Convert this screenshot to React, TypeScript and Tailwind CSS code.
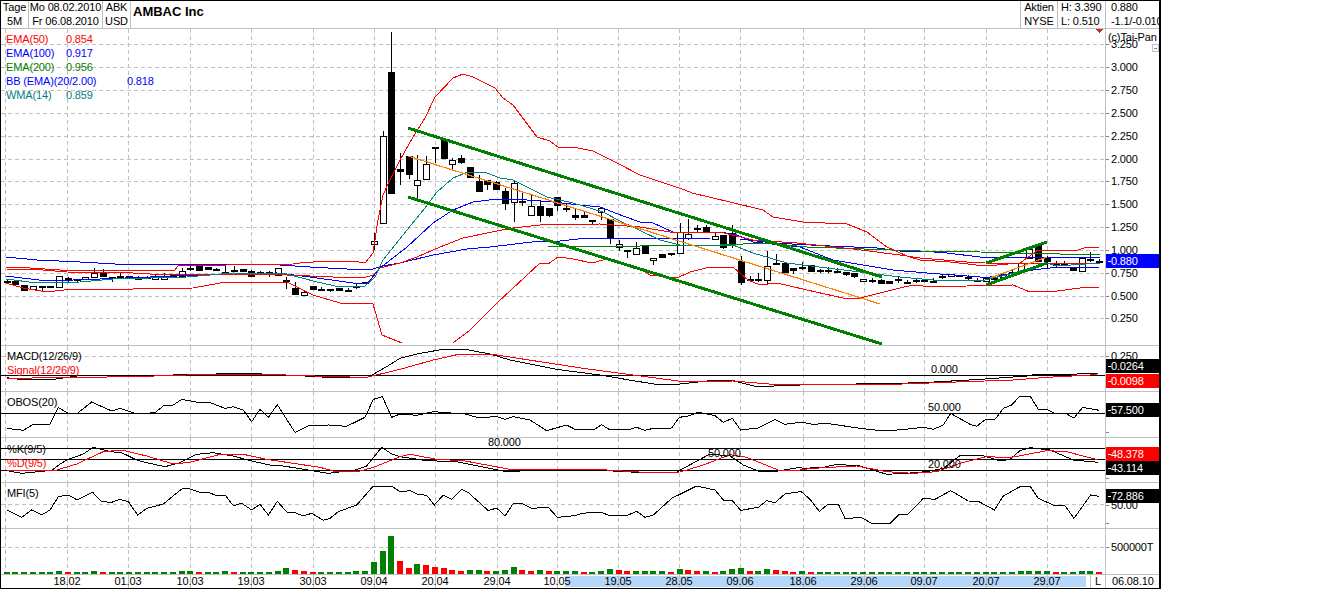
import type { ReactNode } from "react";

type Pt = [number, number];
type Tag = { y: number; text: string; bg: string };
type AxisLabel = { y: number; text: string };
type Candle = [number, number, number, number, number];

const GRID_X = [5, 67, 128, 190, 251, 313, 374, 435, 497, 557, 618, 679, 740, 803, 864, 924, 986, 1047];
const PRICE_Y = [44, 67, 90, 113, 136, 159, 181, 204, 227, 250, 273, 296, 318];

// top, bottom, wick top, wick bottom, filled. page pixels, read off the picture
const CANDLES: Candle[] = [
  [281, 283, 280, 284, 1], [281, 285, 281, 285, 1], [285, 291, 285, 291, 1], [286, 289, 286, 289, 0], [286, 287, 286, 291, 1],
  [286, 287, 286, 287, 1], [276, 287, 276, 287, 0], [278, 280, 277, 283, 1], [279, 281, 279, 283, 1], [277, 279, 277, 280, 0],
  [273, 277, 268, 277, 0], [272, 277, 269, 277, 1], [277, 279, 277, 282, 1], [276, 279, 273, 279, 1], [276, 279, 276, 279, 1],
  [277, 280, 276, 280, 1], [277, 278, 276, 279, 1], [276, 279, 274, 279, 0], [276, 279, 273, 279, 0], [275, 277, 275, 277, 1],
  [271, 276, 268, 276, 0], [268, 269, 264, 271, 1], [266, 271, 266, 271, 1], [267, 270, 267, 270, 1], [269, 270, 268, 271, 1],
  [272, 273, 264, 274, 1], [270, 271, 266, 271, 1], [269, 272, 269, 272, 1], [271, 277, 270, 277, 1], [272, 273, 271, 275, 1],
  [272, 274, 271, 277, 1], [268, 275, 268, 275, 0], [280, 282, 277, 289, 1], [288, 295, 282, 295, 1], [292, 295, 290, 296, 0],
  [286, 290, 286, 290, 1], [289, 291, 287, 291, 1], [289, 291, 289, 292, 1], [288, 291, 288, 291, 1], [290, 291, 288, 291, 1],
  [286, 288, 284, 289, 1], [282, 284, 282, 284, 1], [241, 244, 233, 250, 0], [136, 223, 131, 223, 0], [72, 194, 32, 194, 1],
  [169, 172, 153, 185, 1], [156, 175, 156, 179, 1], [180, 185, 155, 198, 0], [164, 179, 156, 179, 0], [147, 148, 147, 163, 1],
  [140, 159, 140, 159, 1], [160, 164, 158, 169, 0], [158, 163, 155, 164, 1], [167, 178, 167, 178, 1], [181, 192, 175, 192, 1],
  [180, 185, 180, 190, 1], [182, 190, 181, 190, 1], [191, 204, 188, 210, 1], [183, 202, 180, 222, 0], [201, 203, 192, 206, 1],
  [206, 215, 195, 215, 0], [206, 216, 200, 222, 1], [208, 216, 208, 217, 1], [197, 206, 197, 211, 1], [208, 210, 204, 212, 1],
  [215, 218, 208, 220, 1], [215, 218, 212, 218, 1], [220, 222, 220, 224, 1], [208, 212, 207, 220, 0], [219, 239, 219, 244, 1],
  [244, 247, 240, 251, 0], [250, 252, 250, 258, 1], [248, 254, 242, 254, 0], [246, 254, 246, 254, 1], [258, 260, 258, 265, 0],
  [254, 258, 254, 258, 1], [253, 255, 253, 256, 1], [232, 253, 223, 253, 0], [234, 238, 219, 240, 0], [228, 229, 225, 232, 1],
  [227, 233, 225, 233, 1], [236, 239, 232, 239, 0], [235, 248, 235, 249, 1], [233, 246, 225, 248, 1], [261, 283, 256, 285, 1],
  [279, 280, 276, 282, 1], [279, 280, 273, 282, 1], [266, 280, 251, 284, 0], [263, 264, 254, 265, 1], [263, 273, 263, 273, 1],
  [268, 271, 268, 274, 1], [267, 269, 262, 270, 1], [265, 272, 265, 272, 1], [270, 272, 269, 273, 1], [270, 271, 267, 273, 1],
  [271, 273, 268, 273, 1], [272, 275, 272, 276, 1], [273, 277, 273, 278, 1], [279, 281, 279, 281, 0], [280, 281, 278, 283, 1],
  [280, 284, 279, 284, 1], [281, 284, 281, 284, 1], [279, 281, 277, 283, 1], [282, 283, 280, 284, 1], [280, 281, 279, 283, 1],
  [280, 282, 280, 282, 1], [281, 283, 278, 283, 1], [276, 278, 275, 279, 1], [274, 276, 274, 277, 0], [275, 277, 275, 277, 1],
  [277, 279, 275, 280, 1], [280, 281, 278, 281, 1], [278, 281, 278, 281, 0], [278, 280, 278, 281, 1], [274, 277, 274, 279, 0],
  [272, 274, 269, 276, 1], [263, 271, 263, 271, 0], [249, 258, 249, 259, 0], [245, 262, 245, 262, 1], [258, 262, 256, 268, 1],
  [263, 266, 261, 268, 1], [263, 266, 261, 266, 1], [267, 271, 267, 271, 1], [258, 271, 258, 272, 0], [259, 261, 252, 262, 1],
  [261, 263, 259, 264, 1],
];

// index -> volume bar height and colour where it isn't the usual 2px green
const VOLUME: Record<number, [number, string]> = {
  6: [3, "g"], 7: [2, "r"], 10: [3, "g"], 11: [2, "r"], 20: [3, "g"], 21: [3, "g"], 22: [2, "r"], 25: [3, "g"], 26: [2, "r"],
  31: [3, "g"], 32: [6, "g"], 33: [4, "r"], 34: [3, "r"], 35: [2, "r"], 40: [3, "g"], 41: [3, "g"], 42: [12, "g"], 43: [23, "g"],
  44: [38, "g"], 45: [13, "r"], 46: [6, "r"], 47: [10, "g"], 48: [9, "r"], 49: [7, "r"], 50: [6, "r"], 51: [4, "r"], 52: [3, "r"],
  53: [4, "g"], 54: [4, "g"], 55: [3, "r"], 56: [3, "g"], 57: [4, "g"], 58: [7, "g"], 59: [4, "r"], 60: [3, "r"], 61: [4, "g"],
  62: [3, "r"], 63: [3, "g"], 64: [3, "g"], 65: [3, "g"], 66: [2, "r"], 68: [3, "g"], 69: [5, "g"], 70: [4, "r"], 71: [3, "r"],
  72: [3, "g"], 73: [3, "g"], 74: [3, "g"], 75: [3, "g"], 76: [2, "r"], 77: [5, "g"], 78: [4, "r"], 79: [3, "r"], 80: [3, "g"],
  81: [2, "r"], 82: [3, "g"], 83: [5, "g"], 84: [6, "g"], 85: [3, "r"], 86: [3, "g"], 87: [5, "g"], 88: [4, "r"], 89: [3, "r"],
  90: [2, "r"], 91: [3, "g"], 92: [2, "r"], 116: [3, "g"], 117: [3, "g"], 118: [3, "g"], 119: [3, "g"], 120: [2, "r"], 123: [3, "g"],
  124: [3, "g"], 125: [2, "r"],
};

const candleX = (i: number) => Math.round(6.7 + 8.74 * i);

const flat = (pts: Pt[]) => pts.map(([x, y]) => `${x},${y}`).join(" ");

// panel lines were read from 3x crops, so they come in crop coordinates
function crop(ox: number, oy: number, raw: number[]): Pt[] {
  const out: Pt[] = [];
  for (let i = 0; i < raw.length; i += 2) out.push([ox + raw[i] / 3, oy + raw[i + 1] / 3]);
  return out;
}
const merged = (...parts: Pt[][]) => flat(parts.flat().sort((a, b) => a[0] - b[0]));

const MAIN_LINES: { color: string; pts: Pt[] }[] = [
  {
    color: "#0000ff",
    pts: [[6, 257], [37, 260], [80, 262], [115, 264], [175, 264], [235, 265], [280, 265], [310, 267], [365, 270], [373, 269], [382, 266], [400, 263], [433, 255], [467, 249], [490, 247], [540, 241], [560, 241], [587, 238], [640, 238], [710, 239], [740, 239], [773, 243], [830, 246], [877, 248], [900, 251], [920, 251], [947, 253], [980, 257], [1030, 257], [1100, 257]],
  },
  {
    color: "#0000ff",
    pts: [[6, 276], [47, 281], [100, 279], [200, 275], [277, 273], [310, 277], [353, 283], [367, 284], [380, 268], [407, 247], [433, 223], [453, 210], [473, 202], [497, 199], [527, 200], [553, 202], [580, 205], [600, 207], [623, 216], [640, 222], [653, 223], [673, 232], [720, 232], [737, 235], [753, 242], [800, 247], [833, 260], [893, 270], [927, 273], [980, 277], [990, 277], [1033, 270], [1050, 268], [1100, 267]],
  },
  {
    color: "#008000",
    pts: [[548, 247], [560, 246], [640, 246], [720, 245], [767, 243], [807, 247], [920, 251], [980, 252], [1017, 253], [1060, 254], [1100, 254]],
  },
  {
    color: "#ff0000",
    pts: [[6, 267], [30, 268], [60, 270], [100, 270], [175, 270], [178, 266], [227, 265], [293, 264], [300, 263], [327, 261], [353, 261], [365, 263], [373, 253], [378, 220], [383, 195], [390, 180], [400, 160], [413, 137], [425, 118], [435, 97], [453, 78], [463, 74], [473, 77], [495, 88], [503, 98], [513, 105], [537, 137], [550, 141], [558, 147], [573, 147], [593, 151], [617, 163], [640, 175], [685, 190], [692, 193], [730, 202], [763, 210], [773, 217], [803, 222], [847, 224], [867, 232], [887, 247], [907, 256], [920, 260], [950, 262], [985, 266], [1020, 263], [1038, 250], [1060, 250], [1075, 251], [1087, 247], [1099, 247]],
  },
  {
    color: "#ff0000",
    pts: [[6, 269], [43, 270], [67, 272], [133, 273], [150, 274], [227, 274], [287, 275], [333, 277], [363, 278], [373, 275], [380, 268], [400, 263], [417, 257], [440, 247], [463, 238], [497, 231], [513, 228], [540, 225], [600, 224], [640, 227], [670, 232], [720, 232], [753, 240], [797, 243], [853, 249], [900, 255], [920, 258], [967, 262], [985, 263], [1033, 264], [1100, 263]],
  },
  {
    color: "#ff0000",
    pts: [[6, 283], [23, 288], [47, 292], [72, 289], [133, 289], [193, 288], [220, 283], [287, 282], [313, 295], [340, 303], [362, 303], [373, 304], [382, 335], [402, 343]],
  },
  {
    color: "#ff0000",
    pts: [[453, 343], [470, 330], [497, 303], [540, 263], [548, 264], [558, 257], [573, 259], [592, 263], [607, 259], [620, 263], [637, 267], [650, 275], [677, 278], [690, 272], [710, 267], [733, 267], [748, 280], [760, 285], [777, 283], [807, 290], [843, 298], [860, 298], [880, 293], [900, 288], [913, 285], [933, 287], [967, 286], [1013, 285], [1030, 292], [1057, 291], [1080, 288], [1099, 287]],
  },
  {
    color: "#008080",
    pts: [[6, 279], [37, 283], [80, 282], [113, 279], [187, 277], [233, 273], [287, 274], [317, 282], [340, 287], [365, 286], [375, 277], [383, 260], [407, 230], [425, 208], [437, 192], [453, 178], [468, 172], [487, 173], [500, 178], [513, 180], [547, 197], [573, 203], [603, 212], [620, 221], [660, 240], [680, 245], [733, 245], [753, 253], [787, 263], [900, 277], [933, 280], [985, 280], [1010, 274], [1047, 263], [1057, 266], [1100, 263]],
  },
];

const CHANNELS: [number, number, number, number][] = [
  [408, 128, 882, 277],
  [408, 197, 882, 344],
  [986, 263, 1047, 242],
  [986, 285, 1047, 263],
];

const MACD = merged(
  crop(0, 340, [20, 113, 60, 118, 160, 118, 245, 106, 400, 108, 560, 104, 740, 100, 880, 106, 1000, 113, 1100, 113, 1125, 100, 1160, 80]),
  crop(400, 340, [0, 55, 60, 40, 130, 28, 195, 28, 270, 42, 330, 60, 470, 88, 600, 105, 700, 122, 780, 135, 830, 133, 930, 122, 1000, 122, 1070, 140, 1200, 135]),
  crop(780, 340, [340, 130, 430, 128, 600, 118, 740, 108, 770, 102, 890, 102, 955, 100]),
);
const SIGNAL = merged(
  crop(0, 340, [20, 115, 400, 110, 560, 105, 800, 103, 1000, 110, 1100, 112]),
  crop(400, 340, [0, 88, 100, 60, 180, 42, 270, 42, 400, 62, 550, 85, 700, 105, 850, 125, 1000, 123, 1120, 133, 1200, 133]),
  crop(780, 340, [340, 133, 500, 127, 700, 120, 800, 112, 950, 104]),
);
const OBOS = merged(
  crop(0, 340, [20, 265, 70, 271, 100, 253, 150, 253, 175, 203, 205, 220, 232, 220, 275, 186, 335, 213, 360, 205, 410, 222, 465, 218, 490, 198, 520, 195, 545, 178, 600, 188, 625, 186, 675, 205, 700, 200, 730, 210, 755, 245, 780, 208, 805, 232, 832, 194, 885, 277, 930, 255, 950, 258, 985, 255, 1040, 259, 1095, 232, 1120, 178, 1147, 170, 1175, 232]),
  crop(400, 340, [0, 222, 50, 226, 100, 215, 140, 218, 195, 222, 235, 233, 290, 230, 315, 238, 340, 230, 390, 240, 440, 272, 500, 255, 525, 268, 580, 270, 605, 254, 630, 270, 690, 268, 710, 262, 735, 271, 760, 265, 815, 264, 838, 232, 865, 228, 895, 217, 945, 227, 970, 247, 997, 235, 1022, 270, 1075, 264, 1125, 238, 1155, 253, 1200, 247]),
  crop(780, 340, [65, 247, 100, 253, 140, 250, 240, 265, 295, 271, 340, 271, 385, 267, 430, 262, 460, 268, 490, 255, 512, 220, 570, 253, 590, 259, 617, 238, 645, 238, 670, 205, 695, 195, 720, 168, 750, 168, 775, 208, 800, 208, 825, 220, 860, 222, 882, 234, 908, 202, 958, 211]),
);
const STOCH_K = merged(
  crop(0, 340, [20, 392, 65, 400, 155, 391, 180, 372, 205, 358, 250, 342, 280, 322, 330, 335, 365, 338, 410, 360, 440, 368, 495, 380, 540, 368, 590, 343, 640, 338, 700, 348, 750, 362, 810, 375, 850, 378, 905, 387, 985, 400, 1065, 390, 1100, 378, 1145, 322, 1175, 342]),
  crop(400, 340, [0, 350, 80, 362, 170, 365, 270, 385, 320, 395, 460, 388, 620, 392, 730, 398, 830, 396, 930, 342, 990, 348, 1030, 375, 1075, 393, 1135, 393, 1170, 387, 1200, 382]),
  crop(780, 340, [70, 385, 130, 382, 170, 373, 240, 378, 320, 403, 410, 398, 450, 393, 490, 385, 540, 347, 610, 347, 660, 363, 690, 358, 720, 332, 750, 323, 810, 330, 880, 360, 955, 367]),
);
const STOCH_D = merged(
  crop(0, 340, [20, 390, 160, 393, 230, 372, 310, 335, 365, 330, 440, 348, 520, 372, 570, 367, 660, 343, 730, 343, 800, 358, 960, 382, 1000, 393, 1080, 393, 1120, 382]),
  crop(400, 340, [0, 350, 30, 343, 110, 358, 190, 362, 330, 388, 620, 390, 750, 398, 840, 396, 910, 375, 990, 344, 1040, 352, 1135, 390, 1200, 390]),
  crop(780, 340, [70, 388, 130, 383, 230, 378, 320, 395, 400, 400, 470, 395, 540, 370, 620, 350, 690, 353, 800, 332, 860, 335, 955, 360]),
);
const MFI = merged(
  crop(0, 340, [20, 510, 65, 532, 95, 510, 125, 525, 150, 510, 175, 470, 205, 465, 232, 480, 278, 457, 305, 485, 335, 487, 360, 478, 385, 485, 413, 525, 440, 505, 490, 492, 545, 447, 565, 445, 600, 457, 625, 457, 650, 467, 675, 465, 700, 497, 725, 490, 755, 510, 780, 493, 805, 525, 832, 484, 860, 516, 885, 518, 910, 528, 935, 520, 970, 541, 990, 535, 1015, 515, 1070, 495, 1120, 438, 1175, 438]),
  crop(400, 340, [0, 455, 30, 452, 50, 462, 80, 466, 103, 495, 130, 465, 155, 478, 185, 448, 205, 458, 265, 512, 290, 504, 315, 528, 340, 490, 365, 490, 395, 505, 445, 502, 472, 532, 525, 527, 545, 520, 600, 516, 625, 525, 685, 525, 710, 514, 735, 532, 760, 525, 815, 475, 890, 438, 945, 450, 970, 480, 997, 482, 1022, 511, 1075, 502, 1100, 482, 1125, 488, 1155, 462, 1200, 455]),
  crop(780, 340, [65, 456, 90, 478, 118, 514, 145, 492, 175, 492, 195, 535, 245, 533, 275, 550, 330, 550, 355, 525, 385, 522, 430, 475, 465, 478, 512, 452, 565, 483, 595, 484, 643, 510, 670, 468, 720, 440, 750, 438, 775, 475, 820, 495, 855, 497, 882, 535, 932, 465, 958, 469]),
);

const DATES = [
  ["18.02", 67], ["01.03", 128], ["10.03", 190], ["19.03", 251], ["30.03", 313], ["09.04", 374], ["20.04", 435], ["29.04", 497], ["10.05", 557],
  ["19.05", 618], ["28.05", 679], ["09.06", 740], ["18.06", 803], ["29.06", 864], ["09.07", 924], ["20.07", 986], ["29.07", 1047],
] as const;

const PRICE_AXIS: AxisLabel[] = ["3.250", "3.000", "2.750", "2.500", "2.250", "2.000", "1.750", "1.500", "1.250", "1.000", "0.750", "0.500", "0.250"].map(
  (text, i) => ({ text, y: PRICE_Y[i] }),
);

function Panel(props: {
  top: number;
  height: number;
  hClass: string;
  dashY?: number[];
  axis?: AxisLabel[];
  ticks?: number[];
  tags?: Tag[];
  overlay?: ReactNode;
  axisExtra?: ReactNode;
  children: ReactNode;
}) {
  const { top, height } = props;
  const h = height - 1;
  return (
    <div className={`${props.hClass} relative flex border-b border-[#c0c0c0]`}>
      <svg width={1104} height={h} viewBox={`1 ${top} 1104 ${h}`} shapeRendering="crispEdges" className="block shrink-0 overflow-visible">
        {GRID_X.map((x) => (
          <line key={x} x1={x + 0.5} x2={x + 0.5} y1={top} y2={top + h} stroke="#c0c0c0" strokeDasharray="4 3" />
        ))}
        {(props.dashY ?? []).map((y) => (
          <line key={y} x1={1} x2={1105} y1={y + 0.5} y2={y + 0.5} stroke="#c0c0c0" strokeDasharray="4 3" />
        ))}
        {props.children}
      </svg>
      {props.overlay}
      <div className="relative w-[54px] overflow-hidden border-l border-[#c0c0c0]">
        <svg width={53} height={h} viewBox={`1106 ${top} 53 ${h}`} shapeRendering="crispEdges" className="absolute inset-0 block">
          {(props.axis ?? []).map((a) => (
            <g key={a.text}>
              <line x1={1106} x2={1109} y1={a.y + 0.5} y2={a.y + 0.5} stroke="#808080" />
              <text x={1111} y={a.y + 4} fill="#000" shapeRendering="auto">
                {a.text}
              </text>
            </g>
          ))}
          {(props.ticks ?? []).map((y) => (
            <line key={y} x1={1106} x2={1109} y1={y + 0.5} y2={y + 0.5} stroke="#808080" />
          ))}
        </svg>
        {props.axisExtra}
        {(props.tags ?? []).map((t) => (
          <div
            key={t.text}
            className={`absolute inset-x-0 flex h-[14px] items-center pl-[5px] text-white ${t.bg}`}
            style={{ top: t.y - top }}
          >
            <span className="absolute left-[2px] top-[7px] h-px w-[3px] bg-white" />
            {t.text}
          </div>
        ))}
      </div>
    </div>
  );
}

function Hline({ y }: { y: number }) {
  return <line x1={1} x2={1105} y1={y + 0.5} y2={y + 0.5} stroke="#000" />;
}

function Label({ x, y, text, color = "#000" }: { x: number; y: number; text: string; color?: string }) {
  return (
    <text x={x} y={y + 4} fill={color} shapeRendering="auto">
      {text}
    </text>
  );
}

function Candles() {
  return (
    <g>
      {CANDLES.map(([top, bottom, wickTop, wickBottom, filled], i) => {
        const x = candleX(i);
        return (
          <g key={i}>
            <line x1={x + 0.5} x2={x + 0.5} y1={wickTop} y2={wickBottom} stroke="#000" />
            {filled ? (
              <rect x={x - 3} y={top} width={7} height={Math.max(bottom - top, 2)} fill="#000" />
            ) : (
              <rect x={x - 2.5} y={top + 0.5} width={6} height={bottom - top} fill="#fff" stroke="#000" />
            )}
          </g>
        );
      })}
    </g>
  );
}

function MainPanel() {
  const legend = [
    { name: "EMA(50)", value: "0.854", color: "text-[#ff0000]", w: "w-[60px]" },
    { name: "EMA(100)", value: "0.917", color: "text-[#0000ff]", w: "w-[60px]" },
    { name: "EMA(200)", value: "0.956", color: "text-[#008000]", w: "w-[60px]" },
    { name: "BB (EMA)(20/2.00)", value: "0.818", color: "text-[#0000ff]", w: "w-[121px]" },
    { name: "WMA(14)", value: "0.859", color: "text-[#008080]", w: "w-[60px]" },
  ];
  return (
    <Panel
      top={29}
      height={317}
      hClass="h-[317px]"
      dashY={PRICE_Y}
      axis={PRICE_AXIS}
      tags={[{ y: 254, text: "0.880", bg: "bg-[#0000ff]" }]}
      overlay={
        <div className="absolute left-[5px] top-[3px] flex flex-col">
          {legend.map((l) => (
            <div key={l.name} className={`flex h-[14px] items-center ${l.color}`}>
              <span className={l.w}>{l.name}</span>
              <span>{l.value}</span>
            </div>
          ))}
        </div>
      }
      axisExtra={
        <>
          <div className="absolute left-[2px] top-[2px] leading-[12px]">(c)Tai-Pan</div>
          <div className="absolute left-[46px] top-[15px] flex h-[8px] w-[7px] items-center justify-center border border-[#c0c0c0] bg-white">
            <span className="h-px w-[3px] bg-[#808080]" />
          </div>
        </>
      }
    >
      <Candles />
      {MAIN_LINES.map((l, i) => (
        <polyline key={i} points={flat(l.pts)} fill="none" stroke={l.color} />
      ))}
      <line x1={408} y1={156} x2={880} y2={304} stroke="#ff8000" strokeWidth={1.2} />
      <line x1={990} y1={278} x2={1047} y2={257} stroke="#ff8000" strokeWidth={1.2} />
      {CHANNELS.map(([x1, y1, x2, y2]) => (
        <line key={x1 + y1} x1={x1} y1={y1} x2={x2} y2={y2} stroke="#008000" strokeWidth={3} />
      ))}
      <polygon points="1096,29 1103,29 1099.5,33" fill="#c03030" />
    </Panel>
  );
}

function VolumeBars() {
  return (
    <g>
      {CANDLES.map((_, i) => {
        const [h, color] = VOLUME[i] ?? [2, "g"];
        return <rect key={i} x={candleX(i) - 3} y={574 - h} width={6} height={h} fill={color === "g" ? "#008000" : "#ff0000"} />;
      })}
    </g>
  );
}

function HeaderCell({ top, bottom, className, center }: { top: string; bottom: string; className: string; center?: boolean }) {
  return (
    <div className={`flex flex-col ${className} ${center ? "items-center" : "pl-[3px]"}`}>
      <div className="flex h-[14px] items-center whitespace-nowrap">{top}</div>
      <div className="flex h-[14px] items-center whitespace-nowrap">{bottom}</div>
    </div>
  );
}

function DateAxis() {
  return (
    <div className="flex h-[13px]">
      <div className="relative w-[1089px]">
        <div className="absolute bottom-[1px] left-[564px] right-[4px] top-[1px] bg-[#b5d7fa]" />
        {DATES.map(([text, x]) => (
          <div key={text} className="absolute inset-y-0 w-px bg-[#c0c0c0]" style={{ left: x - 1 }} />
        ))}
        {DATES.map(([text, x]) => (
          <span key={text} className="absolute top-0 -translate-x-1/2 leading-[13px]" style={{ left: x - 1 }}>
            {text}
          </span>
        ))}
      </div>
      <div className="flex w-[15px] items-center justify-center border-l border-[#c0c0c0]">L</div>
      <div className="flex w-[54px] items-center border-l border-[#c0c0c0] pl-[6px]">06.08.10</div>
    </div>
  );
}

export default function App() {
  return (
    <div className="h-[589px] w-[1323px] overflow-hidden bg-white font-['Liberation_Sans',Arial,sans-serif] text-[11px] leading-none tracking-[-0.15px] text-black">
      <div className="h-[589px] w-[1161px] border-y border-l border-r-2 border-black">
        <div className="flex h-[28px] border-b border-[#c0c0c0]">
          <HeaderCell top="Tage" bottom="5M" center className="w-[28px] border-r border-[#c0c0c0]" />
          <HeaderCell top="Mo 08.02.2010" bottom="Fr 06.08.2010" center className="w-[74px] border-r border-[#c0c0c0]" />
          <HeaderCell top="ABK" bottom="USD" center className="w-[28px] border-r border-[#c0c0c0]" />
          <div className="flex-1 pl-[2px] pt-[4px] text-[13px] font-bold tracking-normal">AMBAC Inc</div>
          <HeaderCell top="Aktien" bottom="NYSE" center className="w-[37px] border-l border-[#c0c0c0]" />
          <HeaderCell top="H: 3.390" bottom="L: 0.510" className="w-[48px] border-l border-[#c0c0c0]" />
          <HeaderCell top="0.880" bottom="-1.1/-0.010" className="w-[54px] overflow-hidden border-l border-[#c0c0c0] !pl-[5px]" />
        </div>

        <MainPanel />

        <Panel
          top={346}
          height={46}
          hClass="h-[46px]"
          dashY={[356]}
          axis={[{ y: 356, text: "0.250" }]}
          tags={[
            { y: 359, text: "0.0264", bg: "bg-black" },
            { y: 374, text: "0.0098", bg: "bg-[#ff0000]" },
          ]}
        >
          <Hline y={375} />
          <polyline points={MACD} fill="none" stroke="#000" />
          <polyline points={SIGNAL} fill="none" stroke="#ff0000" />
          <Label x={7} y={356} text="MACD(12/26/9)" />
          <Label x={7} y={370} text="Signal(12/26/9)" color="#ff0000" />
          <Label x={931} y={369} text="0.000" />
        </Panel>

        <Panel top={392} height={46} hClass="h-[46px]" ticks={[432]} tags={[{ y: 403, text: "57.500", bg: "bg-black" }]}>
          <Hline y={413} />
          <polyline points={OBOS} fill="none" stroke="#000" />
          <Label x={7} y={402} text="OBOS(20)" />
          <Label x={928} y={407} text="50.000" />
        </Panel>

        <Panel
          top={438}
          height={45}
          hClass="h-[45px]"
          ticks={[478]}
          tags={[
            { y: 447, text: "48.378", bg: "bg-[#ff0000]" },
            { y: 461, text: "43.114", bg: "bg-black" },
          ]}
        >
          <Hline y={448} />
          <Hline y={459} />
          <Hline y={470} />
          <polyline points={STOCH_K} fill="none" stroke="#000" />
          <polyline points={STOCH_D} fill="none" stroke="#ff0000" />
          <Label x={7} y={449} text="%K(9/5)" />
          <Label x={7} y={463} text="%D(9/5)" color="#ff0000" />
          <Label x={488} y={442} text="80.000" />
          <Label x={708} y={453} text="50.000" />
          <Label x={928} y={464} text="20.000" />
        </Panel>

        <Panel
          top={483}
          height={46}
          hClass="h-[46px]"
          dashY={[504]}
          axis={[{ y: 505, text: "50.00" }]}
          ticks={[523]}
          tags={[{ y: 489, text: "72.886", bg: "bg-black" }]}
        >
          <polyline points={MFI} fill="none" stroke="#000" />
          <Label x={7} y={493} text="MFI(5)" />
        </Panel>

        <Panel top={529} height={46} hClass="h-[46px]" dashY={[547]} axis={[{ y: 547, text: "500000T" }]}>
          <VolumeBars />
        </Panel>

        <DateAxis />
      </div>
    </div>
  );
}
